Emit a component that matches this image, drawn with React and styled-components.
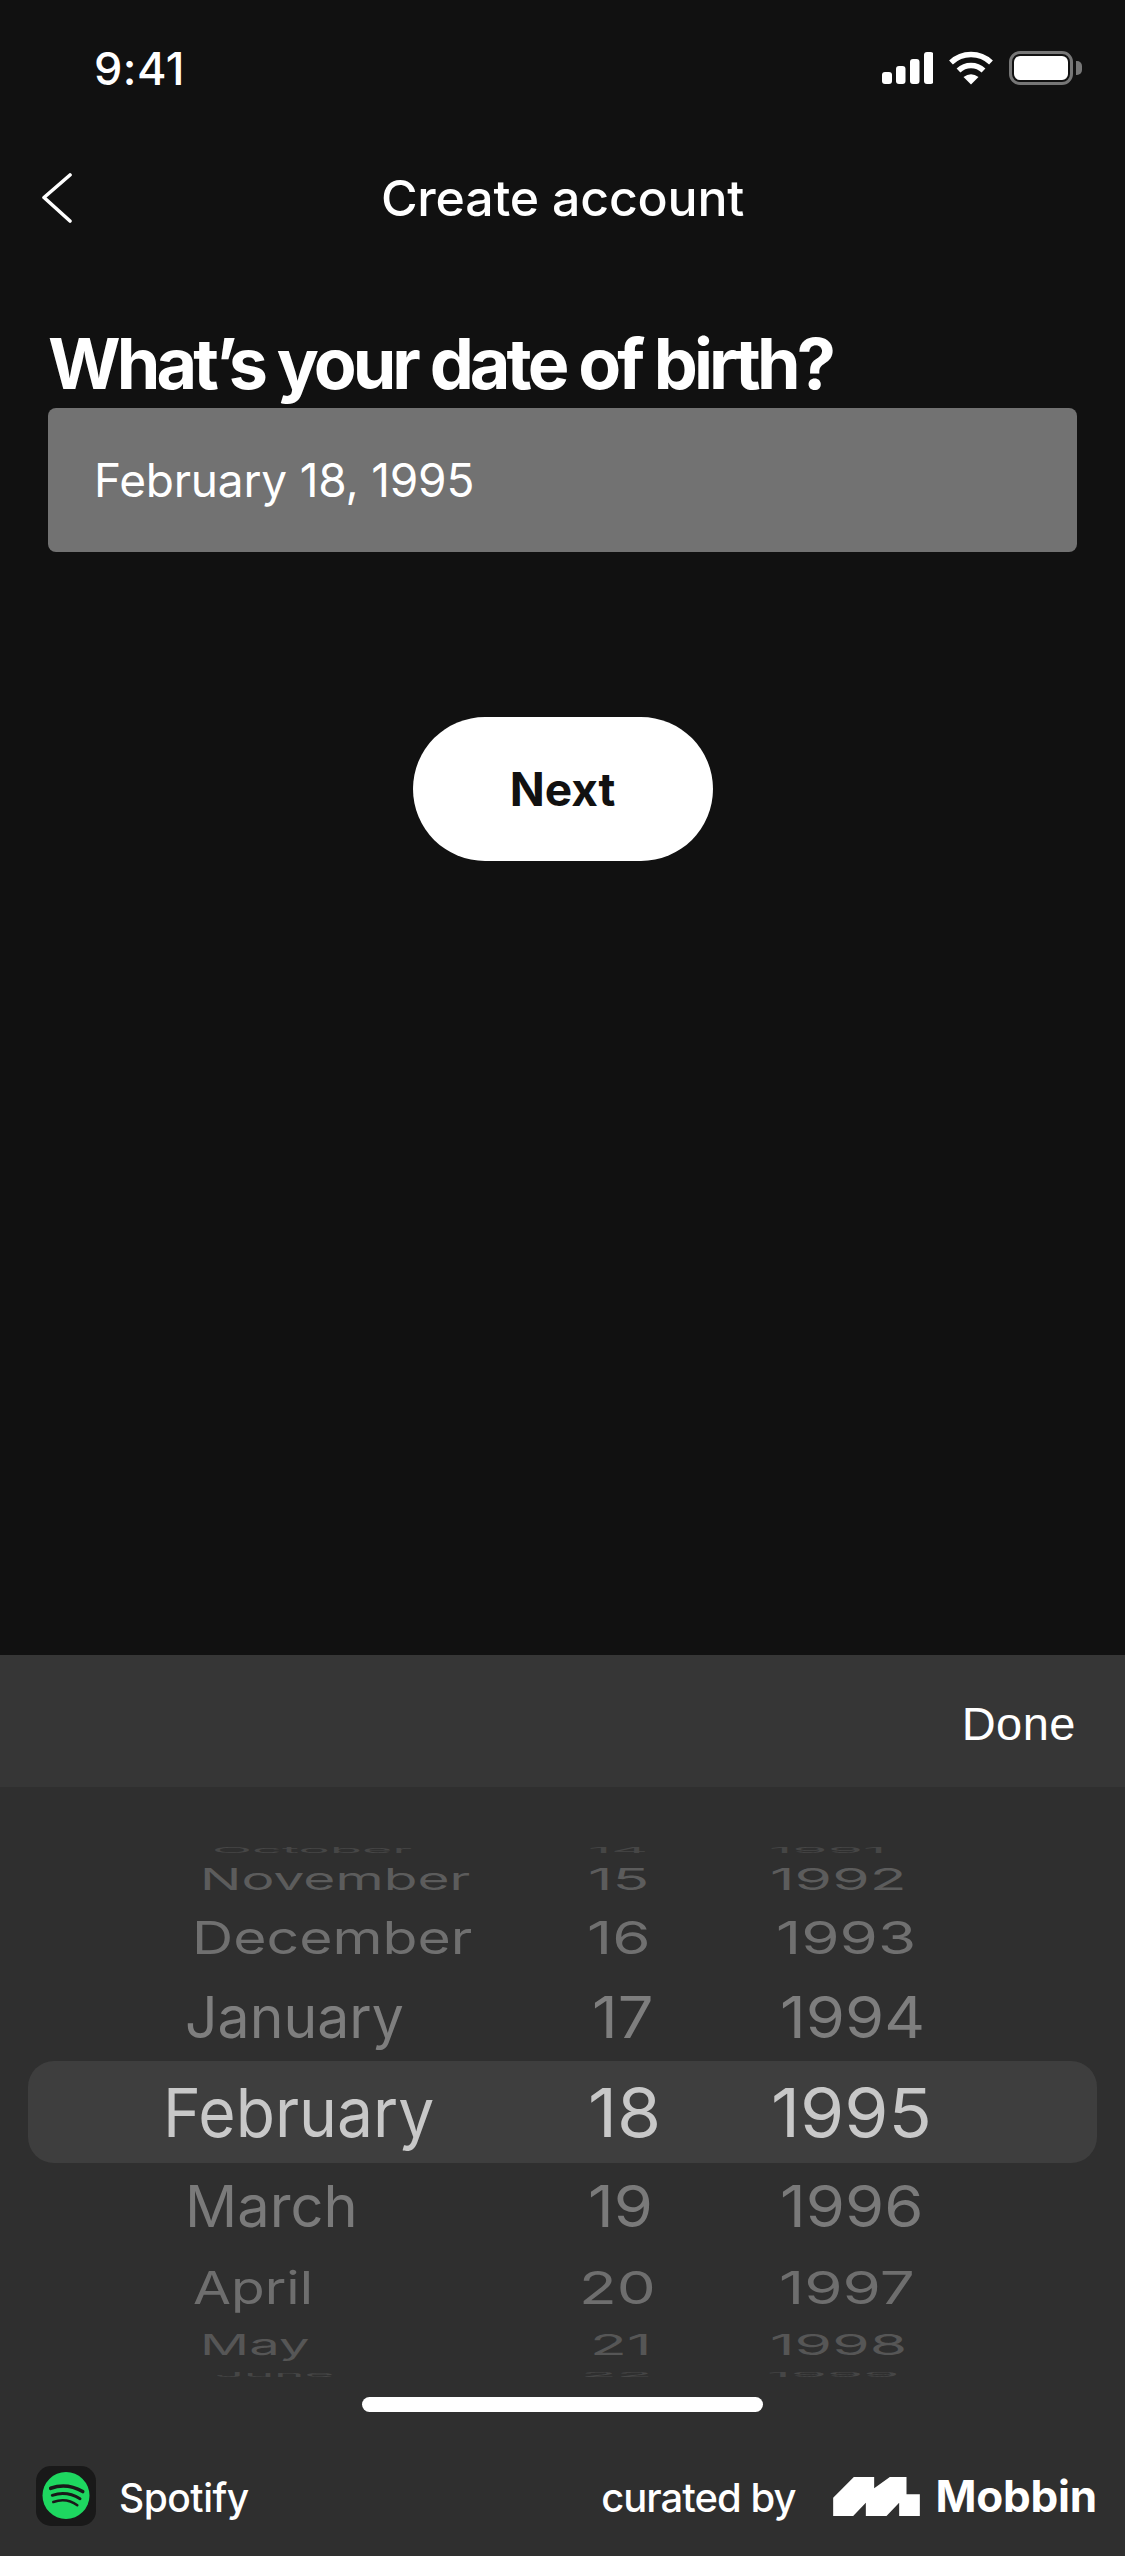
import React from 'react'
import styled, { createGlobalStyle } from 'styled-components'

const wheelRows = [
  { h: 16, sy: 0.12, sx: 0.77, dsx: 0.84, color: '#464646', cells: [['October', 212], ['14', 588], ['1991', 769]] },
  { h: 42, sy: 0.44, sx: 0.81, dsx: 0.89, color: '#5c5c5c', cells: [['November', 200], ['15', 588], ['1992', 770]] },
  { h: 73, sy: 0.67, sx: 0.84, dsx: 0.91, color: '#707070', cells: [['December', 192], ['16', 587], ['1993', 776]] },
  { h: 88, sy: 0.85, sx: 0.84, dsx: 0.93, color: '#7e7e7e', cells: [['January', 185], ['17', 592], ['1994', 780]] },
  { h: 102, sy: 1, sx: 0.943, dsx: 1.05, color: '#c8c8c8', selected: true, cells: [['February', 163], ['18', 588], ['1995', 771]] },
  { h: 86, sy: 0.85, sx: 0.85, dsx: 0.93, color: '#7a7a7a', cells: [['March', 185], ['19', 588], ['1996', 780]] },
  { h: 75, sy: 0.67, sx: 0.81, dsx: 0.91, color: '#6e6e6e', cells: [['April', 193], ['20', 579], ['1997', 779]] },
  { h: 41, sy: 0.42, sx: 0.8, dsx: 0.89, color: '#565656', cells: [['May', 200], ['21', 590], ['1998', 770]] },
  { h: 17, sy: 0.1, sx: 0.75, dsx: 0.86, color: '#464646', cells: [['June', 215], ['22', 581], ['1999', 767]] },
]

const columnStarts = [0, 560, 750]

export default function App() {
  return (
    <>
      <GlobalStyle />
      <Page>
        <StatusBar>
          <Time>9:41</Time>
          <StatusIcons>
            <svg width="51" height="32" viewBox="0 0 51 32" fill="#fff">
              <rect x="0" y="20" width="10" height="12" rx="3" />
              <rect x="14" y="14" width="9.5" height="18" rx="3" />
              <rect x="28" y="7" width="9.5" height="25" rx="3" />
              <rect x="42" y="0" width="9.5" height="32" rx="3" />
            </svg>
            <svg width="46" height="34" viewBox="0 0 46 34" fill="none">
              <path d="M3 11.5A29 29 0 0 1 43 11.5" stroke="#fff" strokeWidth="5.5" />
              <path d="M10.5 19.5A18 18 0 0 1 35.5 19.5" stroke="#fff" strokeWidth="5.5" />
              <path d="M15.5 26Q23 20.5 30.5 26L23 33.5Z" fill="#fff" />
            </svg>
            <Battery>
              <BatteryFill />
              <BatteryNub />
            </Battery>
          </StatusIcons>
        </StatusBar>

        <NavBar>
          <BackButton>
            <svg width="30" height="50" viewBox="0 0 30 50" fill="none">
              <polyline points="28,2 2,24.5 28,48" stroke="#fff" strokeWidth="3.6" strokeLinecap="round" strokeLinejoin="round" />
            </svg>
          </BackButton>
          <NavTitle>Create account</NavTitle>
        </NavBar>

        <Heading>What’s your date of birth?</Heading>
        <DateField>February 18, 1995</DateField>
        <NextButton>Next</NextButton>

        <Sheet>
          <Toolbar>
            <DoneButton>Done</DoneButton>
          </Toolbar>
          <Wheel>
            {wheelRows.map((row) => (
              <WheelRow key={row.cells[0][0]} $h={row.h} $selected={row.selected}>
                {row.cells.map(([label, x], i) => (
                  <WheelCell key={label} $indent={x - columnStarts[i] - (row.selected && i === 0 ? 28 : 0)}>
                    <WheelText $sx={i === 0 ? row.sx : row.dsx} $sy={row.sy} $color={row.color}>{label}</WheelText>
                  </WheelCell>
                ))}
              </WheelRow>
            ))}
          </Wheel>
          <HomeIndicator />
          <Footer>
            <Brand>
              <AppIcon>
                <svg width="60" height="60" viewBox="0 0 60 60" fill="none">
                  <circle cx="30" cy="29.5" r="23.5" fill="#1ed760" />
                  <path d="M14.7 22.3Q30.7 16.5 46.7 25.5" stroke="#191919" strokeWidth="3.6" strokeLinecap="round" />
                  <path d="M16.3 29.3Q30.7 24.5 44 32.7" stroke="#191919" strokeWidth="3" strokeLinecap="round" />
                  <path d="M17.3 36Q30.7 31.5 41.3 39.3" stroke="#191919" strokeWidth="2.5" strokeLinecap="round" />
                </svg>
              </AppIcon>
              <BrandName>Spotify</BrandName>
            </Brand>
            <Credit>
              <CuratedBy>curated by</CuratedBy>
              <svg width="87" height="39" viewBox="20 28 260 117" fill="#fff">
                <path d="M20 90L82 28H143V62L190 28H240V80H280V145H218V105L180 145H118V105L80 145H20Z" />
              </svg>
              <MobbinName>Mobbin</MobbinName>
            </Credit>
          </Footer>
        </Sheet>
      </Page>
    </>
  )
}

const GlobalStyle = createGlobalStyle`
  html, body {
    margin: 0;
    padding: 0;
    background: #111111;
  }
`

const Page = styled.div`
  width: 1125px;
  height: 2556px;
  display: flex;
  flex-direction: column;
  overflow: hidden;
  background: #111111;
  color: #ffffff;
  font-family: "Inter", "Liberation Sans", sans-serif;
`

const StatusBar = styled.div`
  height: 136px;
  display: flex;
  align-items: center;
  justify-content: space-between;
  padding: 0 43px 0 94px;
`

const Time = styled.div`
  font-size: 45px;
  font-weight: 500;
  letter-spacing: 0.5px;
`

const StatusIcons = styled.div`
  display: flex;
  align-items: center;
  gap: 15px;
`

const Battery = styled.div`
  position: relative;
  width: 64px;
  height: 34px;
  box-sizing: border-box;
  border: 3px solid #777777;
  border-radius: 11px;
  margin-right: 9px;
  padding: 2px;
`

const BatteryFill = styled.div`
  height: 100%;
  background: #ffffff;
  border-radius: 6px;
`

const BatteryNub = styled.div`
  position: absolute;
  top: 7px;
  right: -12px;
  width: 6px;
  height: 14px;
  background: #777777;
  border-radius: 0 5px 5px 0;
`

const NavBar = styled.div`
  height: 124px;
  display: grid;
  grid-template-columns: 1fr auto 1fr;
  align-items: center;
`

const BackButton = styled.div`
  display: flex;
  padding-left: 42px;
`

const NavTitle = styled.div`
  font-size: 50px;
  font-weight: 500;
  letter-spacing: -0.2px;
`

const Heading = styled.h1`
  margin: 60px 0 0;
  padding-left: 48px;
  font-size: 70px;
  line-height: 88px;
  font-weight: 700;
  letter-spacing: -3.9px;
`

const DateField = styled.div`
  height: 144px;
  margin: 0 48px;
  padding-left: 46px;
  display: flex;
  align-items: center;
  background: #727272;
  border-radius: 8px;
  font-size: 46px;
  letter-spacing: -0.2px;
`

const NextButton = styled.button`
  align-self: center;
  width: 300px;
  height: 144px;
  margin-top: 165px;
  border: none;
  border-radius: 72px;
  background: #ffffff;
  color: #111111;
  font-family: inherit;
  font-size: 46px;
  font-weight: 700;
`

const Sheet = styled.div`
  margin-top: auto;
  height: 901px;
  display: flex;
  flex-direction: column;
  background: #2f2f2f;
`

const Toolbar = styled.div`
  height: 132px;
  box-sizing: border-box;
  display: flex;
  align-items: center;
  justify-content: flex-end;
  padding: 4px 49px 0 0;
  background: #363636;
`

const DoneButton = styled.div`
  font-size: 47px;
  letter-spacing: 0.5px;
  font-family: "Liberation Sans", sans-serif;
`

const Wheel = styled.div`
  margin-top: 55px;
  display: flex;
  flex-direction: column;
`

const WheelRow = styled.div`
  height: ${(p) => p.$h}px;
  display: grid;
  grid-template-columns: ${(p) => (p.$selected ? '532px 190px 1fr' : '560px 190px 1fr')};
  align-items: center;
  margin: ${(p) => (p.$selected ? '0 28px' : '0')};
  background: ${(p) => (p.$selected ? '#3e3e3e' : 'transparent')};
  border-radius: ${(p) => (p.$selected ? '26px' : '0')};
`

const WheelCell = styled.div`
  padding-left: ${(p) => p.$indent}px;
  height: 0;
  display: flex;
  align-items: center;
`

const WheelText = styled.span`
  display: inline-block;
  font-size: 68px;
  line-height: 1;
  white-space: nowrap;
  color: ${(p) => p.$color};
  transform-origin: left center;
  transform: scale(${(p) => p.$sx}, ${(p) => p.$sy});
`

const HomeIndicator = styled.div`
  align-self: center;
  width: 401px;
  height: 15px;
  margin-top: 15px;
  background: #ffffff;
  border-radius: 8px;
`

const Footer = styled.div`
  height: 60px;
  margin-top: 54px;
  padding: 0 28px 0 36px;
  display: flex;
  align-items: center;
  justify-content: space-between;
`

const Brand = styled.div`
  display: flex;
  align-items: center;
  gap: 23px;
`

const AppIcon = styled.div`
  width: 60px;
  height: 60px;
  background: #191919;
  border-radius: 15px;
`

const BrandName = styled.div`
  font-size: 39px;
  font-weight: 500;
  letter-spacing: -0.5px;
  padding-top: 2px;
`

const Credit = styled.div`
  display: flex;
  align-items: center;
`

const CuratedBy = styled.div`
  font-size: 40px;
  font-weight: 500;
  letter-spacing: -1px;
  margin-right: 38px;
  padding-top: 2px;
`

const MobbinName = styled.div`
  font-size: 44px;
  font-weight: 700;
  letter-spacing: -0.2px;
  margin-left: 15px;
`
